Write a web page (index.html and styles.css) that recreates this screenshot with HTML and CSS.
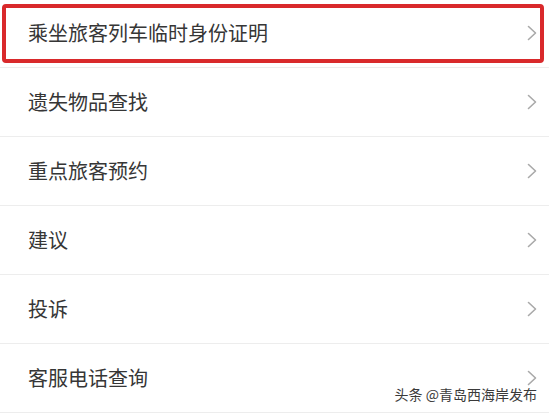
FILE: index.html
```html
<!DOCTYPE html>
<html lang="zh-CN">

<head>
    <meta charset="UTF-8">
    <title>服务</title>
    <meta name="viewport" content="width=device-width, initial-scale=1.0">
    <link rel="stylesheet" href="styles.css">
</head>

<body>
    <div class="page">
        <ul class="menu">
            <li class="menu-item">
                <span class="menu-label">乘坐旅客列车临时身份证明</span>
                <svg class="chevron" viewBox="0 0 10 16"><polyline points="1.5,1.5 8.5,8 1.5,14.5"/></svg>
            </li>
            <li class="menu-item">
                <span class="menu-label">遗失物品查找</span>
                <svg class="chevron" viewBox="0 0 10 16"><polyline points="1.5,1.5 8.5,8 1.5,14.5"/></svg>
            </li>
            <li class="menu-item">
                <span class="menu-label">重点旅客预约</span>
                <svg class="chevron" viewBox="0 0 10 16"><polyline points="1.5,1.5 8.5,8 1.5,14.5"/></svg>
            </li>
            <li class="menu-item">
                <span class="menu-label">建议</span>
                <svg class="chevron" viewBox="0 0 10 16"><polyline points="1.5,1.5 8.5,8 1.5,14.5"/></svg>
            </li>
            <li class="menu-item">
                <span class="menu-label">投诉</span>
                <svg class="chevron" viewBox="0 0 10 16"><polyline points="1.5,1.5 8.5,8 1.5,14.5"/></svg>
            </li>
            <li class="menu-item">
                <span class="menu-label">客服电话查询</span>
                <svg class="chevron" viewBox="0 0 10 16"><polyline points="1.5,1.5 8.5,8 1.5,14.5"/></svg>
            </li>
        </ul>

        <!-- red highlight drawn over the first row -->
        <div class="highlight"></div>

        <div class="watermark">头条 @青岛西海岸发布</div>
    </div>
</body>

</html>
```

FILE: styles.css
```css
body {
    margin: 0;
    padding: 0;
    background: #fff;
    font-family: "Noto Sans CJK SC", "Noto Sans", sans-serif;
    color: #333;
}

.page {
    position: relative;
    width: 549px;
    height: 414px;
    overflow: hidden;
    background: #fff;
}

.menu {
    list-style: none;
    margin: -1px 0 0 0;
    padding: 0;
}

.menu-item {
    display: flex;
    align-items: center;
    justify-content: space-between;
    height: 68px;
    padding: 0 12px 0 28px;
    border-bottom: 1px solid #ededed;
}

.menu-label {
    font-size: 20px;
    line-height: 1;
    color: #363636;
}

.chevron {
    width: 10px;
    height: 16px;
    fill: none;
    stroke: #a9a9a9;
    stroke-width: 1.6;
    stroke-linecap: round;
    stroke-linejoin: round;
}

/* Annotation overlay */
.highlight {
    position: absolute;
    left: 2px;
    top: 4px;
    width: 542px;
    height: 59px;
    box-sizing: border-box;
    border: 4px solid #d9292b;
    border-radius: 4px;
}

.watermark {
    position: absolute;
    right: 12px;
    bottom: 13px;
    font-size: 14px;
    line-height: 1;
    color: #3a3a3a;
    text-shadow: 0 0 2px #fff;
}
```
